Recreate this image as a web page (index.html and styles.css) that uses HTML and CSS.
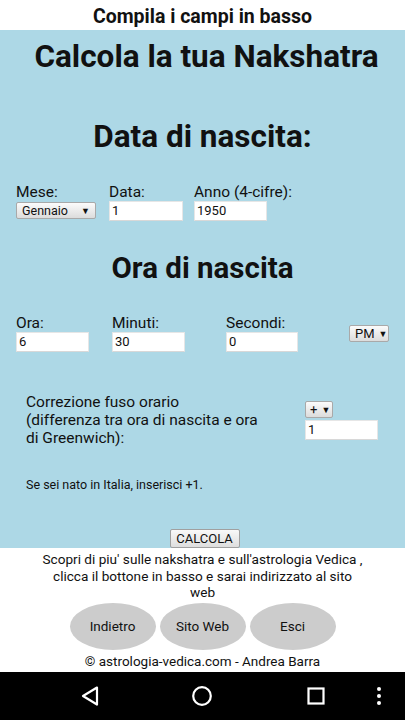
FILE: index.html
```html
<!DOCTYPE html>
<html lang="it">
<head>
<meta charset="utf-8">
<title>Nakshatra</title>
<link rel="stylesheet" href="styles.css">
</head>
<body>
<div class="app">
  <header class="topbar">Compila i campi in basso</header>
  <main class="form">
    <h1 class="title">Calcola la tua Nakshatra</h1>
    <h2 class="section">Data di nascita:</h2>
    <div class="row row-date">
      <div class="field f-mese">
        <span class="label">Mese:</span>
        <span class="select sel-mese">Gennaio<span class="arrow">▼</span></span>
      </div>
      <div class="field f-data">
        <span class="label">Data:</span>
        <span class="input">1</span>
      </div>
      <div class="field f-anno">
        <span class="label">Anno (4-cifre):</span>
        <span class="input">1950</span>
      </div>
    </div>
    <h3 class="section section-ora">Ora di nascita</h3>
    <div class="row row-time">
      <div class="field f-ora">
        <span class="label">Ora:</span>
        <span class="input">6</span>
      </div>
      <div class="field f-min">
        <span class="label">Minuti:</span>
        <span class="input">30</span>
      </div>
      <div class="field f-sec">
        <span class="label">Secondi:</span>
        <span class="input">0</span>
      </div>
      <div class="field f-ampm">
        <span class="select sel-pm">PM<span class="arrow">▼</span></span>
      </div>
    </div>
    <div class="row row-tz">
      <p class="tz-text">Correzione fuso orario<br>(differenza tra ora di nascita e ora di Greenwich):</p>
      <div class="field f-tz">
        <span class="select sel-sign">+<span class="arrow">▼</span></span>
        <span class="input">1</span>
      </div>
    </div>
    <p class="note">Se sei nato in Italia, inserisci +1.</p>
    <div class="submit"><span class="btn">CALCOLA</span></div>
  </main>
  <section class="info">
    <p class="info-text">Scopri di piu' sulle nakshatra e sull'astrologia Vedica , clicca il bottone in basso e sarai indirizzato al sito web</p>
    <div class="ovals">
      <span class="oval">Indietro</span>
      <span class="oval">Sito Web</span>
      <span class="oval">Esci</span>
    </div>
    <p class="copy">© astrologia-vedica.com - Andrea Barra</p>
  </section>
  <nav class="navbar">
    <svg class="nav-icon" width="24" height="24" viewBox="0 0 24 24"><path d="M19 3.5 L5 12 L19 20.5 Z" fill="none" stroke="#fff" stroke-width="2.2" stroke-linejoin="round"/></svg>
    <svg class="nav-icon" width="24" height="24" viewBox="0 0 24 24"><circle cx="12" cy="12" r="8.8" fill="none" stroke="#fff" stroke-width="2.2"/></svg>
    <svg class="nav-icon" width="24" height="24" viewBox="0 0 24 24"><rect x="4.5" y="4.5" width="15" height="15" fill="none" stroke="#fff" stroke-width="2.2"/></svg>
    <svg class="nav-icon dots" width="6" height="20" viewBox="0 0 6 20"><circle cx="3" cy="3" r="2" fill="#fff"/><circle cx="3" cy="10" r="2" fill="#fff"/><circle cx="3" cy="17" r="2" fill="#fff"/></svg>
  </nav>
</div>
</body>
</html>
```

FILE: styles.css
```css
* { box-sizing: border-box; }
html, body { margin: 0; padding: 0; }
body {
  width: 405px;
  height: 720px;
  overflow: hidden;
  font-family: Roboto, "Noto Sans", sans-serif;
  color: #111;
  background: #fff;
}
.app {
  display: flex;
  flex-direction: column;
  height: 720px;
}
.topbar {
  height: 30px;
  display: flex;
  align-items: center;
  justify-content: center;
  font-weight: 700;
  font-size: 19.5px;
  background: #fff;
  padding-top: 2px;
}
.form {
  height: 518px;
  background: #add8e6;
  padding: 9px 0 0;
  display: flex;
  flex-direction: column;
}
.title {
  margin: 0;
  padding-left: 8px;
  text-align: center;
  font-size: 31.5px;
  line-height: 36px;
  font-weight: 700;
}
.section {
  margin: 44px 0 0;
  text-align: center;
  font-size: 31.5px;
  line-height: 36px;
  font-weight: 700;
}
.section-ora { margin-top: 29px; font-size: 29.5px; }
.row {
  display: flex;
  padding-left: 16px;
}
.row-date { margin-top: 28px; }
.row-time { margin-top: 28px; }
.field {
  display: flex;
  flex-direction: column;
}
.label {
  font-size: 15.5px;
  line-height: 18px;
  height: 18px;
  white-space: nowrap;
}
.input {
  display: block;
  height: 20px;
  background: #fff;
  border: 1px solid #e6e6e6;
  border-bottom-color: #d8d8d8;
  font-size: 13px;
  line-height: 18px;
  padding-left: 2px;
  font-family: Roboto, sans-serif;
}
.select {
  display: flex;
  align-items: center;
  justify-content: space-between;
  height: 17px;
  border: 1px solid #a9a9a9;
  border-radius: 2px;
  background: linear-gradient(#fbfbfb, #dcdcdc);
  font-size: 12.5px;
  padding: 0 5px 0 5px;
  font-family: Roboto, sans-serif;
}
.select .arrow { font-size: 9px; }
.f-mese { width: 93px; }
.f-mese .select { width: 80px; margin-top: 1px; }
.f-data { width: 85px; }
.f-data .input { width: 74px; }
.f-anno .input { width: 73px; }
.f-ora { width: 96px; }
.f-ora .input { width: 73px; }
.f-min { width: 114px; }
.f-min .input { width: 73px; }
.f-sec { width: 123px; }
.f-sec .input { width: 72px; }
.f-ampm { padding-top: 11px; }
.sel-pm { width: 40px; gap: 4px; justify-content: flex-start; font-size: 13px; }
.row-tz {
  margin-top: 41px;
  padding-left: 26px;
}
.tz-text {
  margin: 0;
  width: 242px;
  flex: none;
  font-size: 15.5px;
  line-height: 18px;
}
.f-tz { margin-left: 37px; padding-top: 8px; }
.sel-sign { width: 28px; justify-content: flex-start; gap: 4px; padding: 0 4px; font-size: 13px; }
.f-tz .input { width: 73px; margin-top: 2px; }
.note {
  margin: 31px 0 0 26px;
  font-size: 12.5px;
  line-height: 14px;
}
.submit {
  margin-top: auto;
  display: flex;
  justify-content: center;
}
.btn {
  display: block;
  width: 70px;
  height: 19px;
  margin-left: 4px;
  border: 1px solid #a0a0a0;
  border-radius: 2px;
  background: linear-gradient(#f9f9f9, #dedede);
  font-size: 13px;
  line-height: 17px;
  text-align: center;
}
.info {
  height: 124px;
  display: flex;
  flex-direction: column;
  align-items: center;
  padding-top: 3px;
}
.info-text {
  margin: 0;
  width: 322px;
  text-align: center;
  font-size: 13.6px;
  line-height: 16.5px;
}
.ovals {
  display: flex;
  gap: 4px;
  margin-top: 2px;
}
.oval {
  width: 86px;
  height: 47px;
  border-radius: 50%;
  background: #cccccc;
  display: flex;
  align-items: center;
  justify-content: center;
  font-size: 13.5px;
}
.copy {
  margin: 3px 0 0;
  font-size: 13.5px;
  line-height: 16px;
}
.navbar {
  height: 48px;
  background: #000;
  display: flex;
  align-items: center;
  padding: 0 0 0 78px;
}
.nav-icon { flex: none; }
.navbar .nav-icon:nth-child(2) { margin-left: 88px; }
.navbar .nav-icon:nth-child(3) { margin-left: 90px; }
.navbar .dots { margin-left: 48px; }
```
